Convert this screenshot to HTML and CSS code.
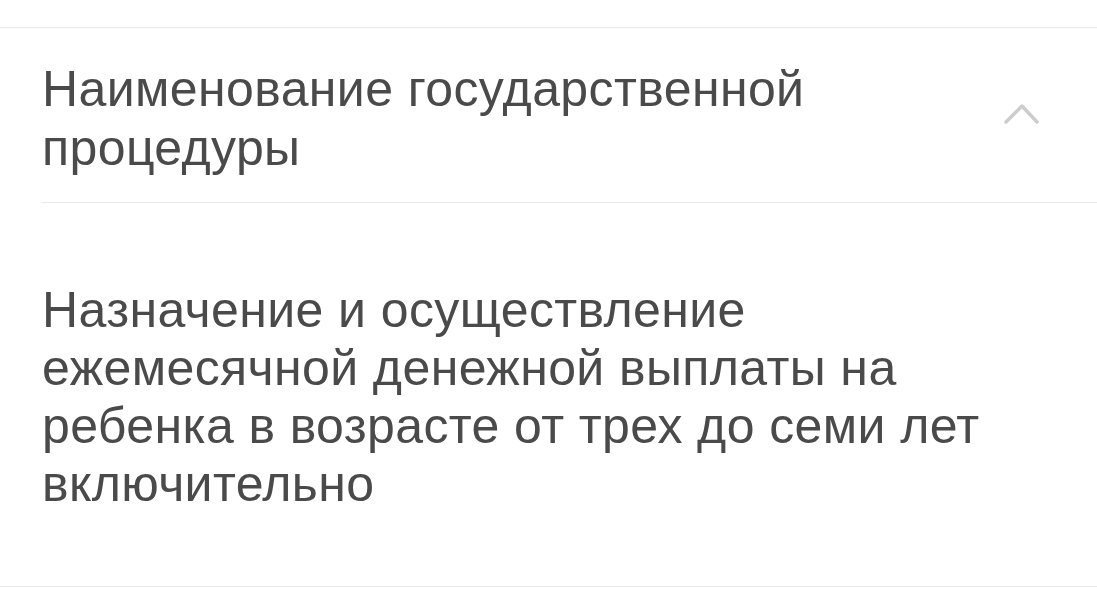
FILE: index.html
```html
<!DOCTYPE html>
<html lang="ru">
<head>
<meta charset="utf-8">
<link rel="stylesheet" href="styles.css">
</head>
<body>
<div class="card">
  <div class="head">
    <div class="head-inner">
      <div class="title">Наименование государственной процедуры</div>
      <svg class="chev" width="40" height="30" viewBox="0 0 40 30">
        <path d="M6 22 L22 6 L37 22" fill="none" stroke="#cdcdcd" stroke-width="3.5" stroke-linecap="round" stroke-linejoin="round"/>
      </svg>
    </div>
  </div>
  <div class="body">
    <div class="value">Назначение и осуществление ежемесячной денежной выплаты на ребенка в возрасте от трех до семи лет включительно</div>
  </div>
</div>
</body>
</html>
```
FILE: styles.css
```css
html, body {
  margin: 0;
  padding: 0;
  background: #fff;
}
body {
  font-family: "Liberation Sans", Arial, sans-serif;
  color: #4a4a4a;
}
.card {
  margin-top: 27px;
  border-top: 1px solid #e8e8e8;
  border-bottom: 1px solid #e8e8e8;
}
.head {
  padding-left: 42px;
}
.head-inner {
  display: flex;
  align-items: flex-start;
  justify-content: space-between;
  padding: 32px 57px 24px 0;
  border-bottom: 1px solid #e8e8e8;
}
.title {
  font-size: 50px;
  line-height: 59px;
  letter-spacing: 0.4px;
  max-width: 840px;
}
.chev {
  display: block;
  margin-top: 40px;
}
.body {
  padding: 78px 42px 73px;
}
.value {
  font-size: 50px;
  line-height: 58px;
  letter-spacing: 0.4px;
  max-width: 1000px;
}
```
